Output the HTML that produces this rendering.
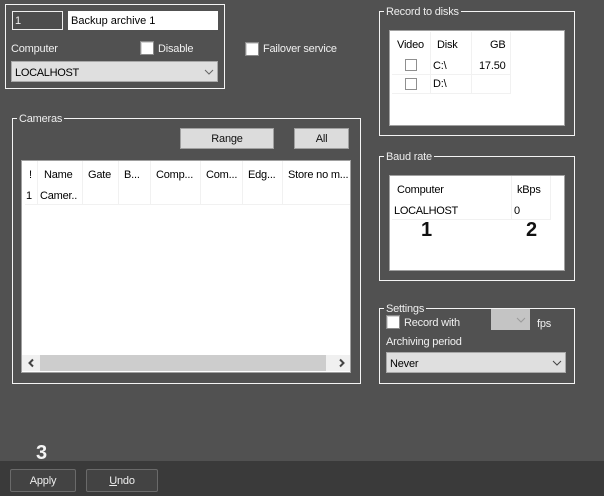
<!DOCTYPE html>
<html>
<head>
<meta charset="utf-8">
<style>
html,body{margin:0;padding:0}
body{width:604px;height:496px;background:#515151;position:relative;overflow:hidden;font-family:"Liberation Sans",sans-serif;font-size:11px;color:#000;letter-spacing:-.2px}
div{position:absolute;box-sizing:border-box}
.t{white-space:nowrap;line-height:16px;height:16px}
.w{color:#f0f0f0}
.box{border:1px solid #f4f4f4}
.lg{background:#515151;padding:0 2px;color:#eee;white-space:nowrap;line-height:15px;height:13px}
.cb{width:14px;height:14px;background:#fff;border:1px solid #8a8a8a;box-shadow:inset 1px 1px 0 #d5d5d5}
.combo{background:#dfdfdf;border:1px solid #a8a8a8}
.btn{background:#dcdcdc;border:1px solid #a0a0a0;text-align:center;line-height:21px;color:#111}
.panel{background:#fff;border:1px solid #a0a0a0}
.v{width:1px;background:#f1f1f1}
.h{height:1px;background:#f1f1f1}
.sm{width:12px;height:12px;background:#fff;border:1px solid #8f8f8f}
.dbtn{border:1px solid #6a6a6a;border-radius:2px;background:#434343;color:#eee;text-align:center;line-height:22px;height:23px;top:469px}
svg{position:absolute}
.n{font-weight:bold;font-size:20px;line-height:22px;height:22px;white-space:nowrap;letter-spacing:0}
</style>
</head>
<body>

<!-- top box -->
<div class="box" style="left:5px;top:4px;width:220px;height:85px"></div>
<div style="left:12px;top:11px;width:51px;height:19px;border:1px solid #eee;background:#4d4d4d"></div>
<div class="t w" style="left:15px;top:13px">1</div>
<div style="left:68px;top:11px;width:150px;height:19px;background:#fff"></div>
<div class="t" style="left:71px;top:13px;letter-spacing:0">Backup archive 1</div>
<div class="t w" style="left:11px;top:41px">Computer</div>
<div class="cb" style="left:140px;top:41px"></div>
<div class="t w" style="left:158px;top:41px">Disable</div>
<div class="combo" style="left:11px;top:61px;width:207px;height:21px"></div>
<div class="t" style="left:15px;top:65px;letter-spacing:-.3px">LOCALHOST</div>
<svg style="left:204px;top:69px" width="10" height="6"><path d="M1 1L5 5L9 1" fill="none" stroke="#666" stroke-width="1"/></svg>

<div class="cb" style="left:245px;top:42px"></div>
<div class="t w" style="left:263px;top:41px">Failover service</div>

<!-- cameras -->
<div class="box" style="left:12px;top:118px;width:349px;height:266px"></div>
<div class="lg" style="left:17px;top:112px">Cameras</div>
<div class="btn" style="left:180px;top:128px;width:94px;height:21px">Range</div>
<div class="btn" style="left:294px;top:128px;width:55px;height:21px">All</div>
<div class="panel" style="left:21px;top:160px;width:330px;height:213px"></div>
<div class="h" style="left:25px;top:204px;width:325px"></div>
<div class="v" style="left:37px;top:161px;height:44px"></div>
<div class="v" style="left:82px;top:161px;height:44px"></div>
<div class="v" style="left:118px;top:161px;height:44px"></div>
<div class="v" style="left:150px;top:161px;height:44px"></div>
<div class="v" style="left:200px;top:161px;height:44px"></div>
<div class="v" style="left:242px;top:161px;height:44px"></div>
<div class="v" style="left:282px;top:161px;height:44px"></div>
<div class="t" style="left:29px;top:167px">!</div>
<div class="t" style="left:44px;top:167px">Name</div>
<div class="t" style="left:88px;top:167px">Gate</div>
<div class="t" style="left:124px;top:167px">B...</div>
<div class="t" style="left:156px;top:167px">Comp...</div>
<div class="t" style="left:206px;top:167px">Com...</div>
<div class="t" style="left:248px;top:167px">Edg...</div>
<div class="t" style="left:288px;top:167px">Store no m...</div>
<div class="t" style="left:26px;top:188px">1</div>
<div class="t" style="left:40px;top:188px">Camer..</div>
<!-- scrollbar -->
<div style="left:22px;top:355px;width:328px;height:16px;background:#f0f0f0"></div>
<div style="left:40px;top:355px;width:286px;height:16px;background:#cdcdcd"></div>
<svg style="left:27px;top:358px" width="9" height="10"><path d="M6 1.5L2.5 5L6 8.5" fill="none" stroke="#444" stroke-width="2"/></svg>
<svg style="left:337px;top:358px" width="9" height="10"><path d="M3 1.5L6.5 5L3 8.5" fill="none" stroke="#444" stroke-width="2"/></svg>

<!-- record to disks -->
<div class="box" style="left:379px;top:11px;width:196px;height:125px"></div>
<div class="lg" style="left:384px;top:5px">Record to disks</div>
<div class="panel" style="left:389px;top:30px;width:176px;height:96px"></div>
<div class="h" style="left:392px;top:74px;width:119px"></div>
<div class="h" style="left:392px;top:93px;width:119px"></div>
<div class="v" style="left:430px;top:32px;height:62px"></div>
<div class="v" style="left:471px;top:32px;height:62px"></div>
<div class="v" style="left:510px;top:32px;height:62px"></div>
<div class="t" style="left:397px;top:37px">Video</div>
<div class="t" style="left:437px;top:37px">Disk</div>
<div class="t" style="left:490px;top:37px">GB</div>
<div class="sm" style="left:405px;top:59px"></div>
<div class="sm" style="left:405px;top:78px"></div>
<div class="t" style="left:433px;top:58px">C:\</div>
<div class="t" style="left:433px;top:76px">D:\</div>
<div class="t" style="left:479px;top:58px">17.50</div>

<!-- baud -->
<div class="box" style="left:379px;top:156px;width:196px;height:125px"></div>
<div class="lg" style="left:384px;top:150px">Baud rate</div>
<div class="panel" style="left:389px;top:175px;width:176px;height:96px"></div>
<div class="h" style="left:392px;top:219px;width:159px"></div>
<div class="v" style="left:511px;top:176px;height:44px"></div>
<div class="v" style="left:550px;top:176px;height:44px"></div>
<div class="t" style="left:397px;top:182px">Computer</div>
<div class="t" style="left:517px;top:182px">kBps</div>
<div class="t" style="left:394px;top:203px;letter-spacing:-.3px">LOCALHOST</div>
<div class="t" style="left:514px;top:203px">0</div>
<div class="n" style="left:421px;top:219px;color:#111">1</div>
<div class="n" style="left:526px;top:219px;color:#111">2</div>

<!-- settings -->
<div class="box" style="left:379px;top:308px;width:196px;height:76px"></div>
<div class="lg" style="left:384px;top:302px">Settings</div>
<div class="cb" style="left:386px;top:315px"></div>
<div class="t w" style="left:404px;top:315px">Record with</div>
<div style="left:491px;top:309px;width:39px;height:21px;background:#c4c4c4"></div>
<svg style="left:516px;top:317px" width="10" height="6"><path d="M1 1L5 5L9 1" fill="none" stroke="#9a9a9a"/></svg>
<div class="t w" style="left:537px;top:316px">fps</div>
<div class="t w" style="left:386px;top:334px">Archiving period</div>
<div class="combo" style="left:386px;top:352px;width:180px;height:21px"></div>
<div class="t" style="left:390px;top:356px">Never</div>
<svg style="left:552px;top:360px" width="10" height="6"><path d="M1 1L5 5L9 1" fill="none" stroke="#444"/></svg>

<!-- bottom -->
<div class="n" style="left:36px;top:442px;color:#f4f4f4">3</div>
<div style="left:0;top:461px;width:604px;height:35px;background:#3a3a3a"></div>
<div class="dbtn" style="left:10px;width:66px">Apply</div>
<div class="dbtn" style="left:86px;width:72px"><span style="text-decoration:underline">U</span>ndo</div>

</body>
</html>
